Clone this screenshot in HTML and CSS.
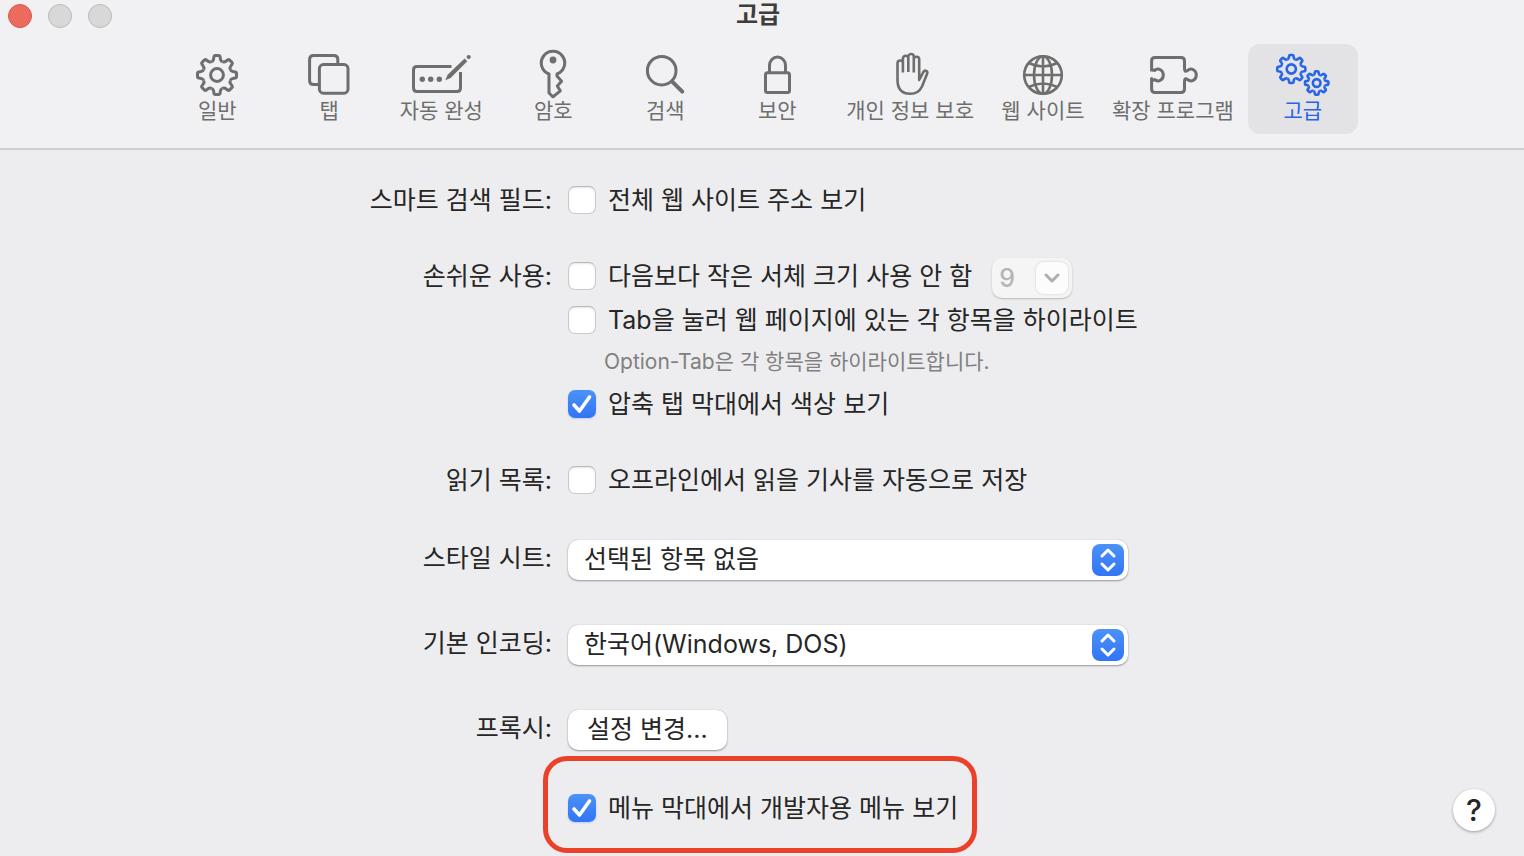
FILE: index.html
```html
<!DOCTYPE html>
<html lang="ko">
<head>
<meta charset="utf-8">
<meta name="viewport" content="width=device-width, initial-scale=1">
<title>고급</title>
<link rel="stylesheet" href="styles.css">
</head>
<body>
<svg class="defs" aria-hidden="true">
  <defs>
    <path id="tooth" d="M-5.5-13.3C-4.2-13.8-3.6-14.6-3.4-16L-3.1-18.1Q-2.9-19.5-1.6-19.5H1.6Q2.9-19.5 3.1-18.1L3.4-16C3.6-14.6 4.2-13.8 5.5-13.3" vector-effect="non-scaling-stroke"/>
    <g id="gear">
      <use href="#tooth"/><use href="#tooth" transform="rotate(45)"/><use href="#tooth" transform="rotate(90)"/><use href="#tooth" transform="rotate(135)"/>
      <use href="#tooth" transform="rotate(180)"/><use href="#tooth" transform="rotate(225)"/><use href="#tooth" transform="rotate(270)"/><use href="#tooth" transform="rotate(315)"/>
      <circle r="6.4" vector-effect="non-scaling-stroke"/>
    </g>
  </defs>
</svg>
<header class="header">
  <div class="titlebar">
    <div class="lights">
      <button class="light light-close" aria-label="닫기"></button>
      <button class="light" aria-label="최소화" disabled></button>
      <button class="light" aria-label="확대" disabled></button>
    </div>
    <h1 class="title">고급</h1>
  </div>
  <nav class="toolbar">
    <button class="tab"><svg class="icon" viewBox="0 0 60 48"><use href="#gear" transform="translate(30 25)"/></svg><span>일반</span></button>
    <button class="tab"><svg class="icon" viewBox="0 0 60 48"><rect x="20.4" y="14.6" width="28.6" height="28.6" rx="4"/><path d="M20 34.4H14.6Q10.6 34.4 10.6 30.4V9.6Q10.6 5.6 14.6 5.6H34.8Q38.8 5.6 38.8 9.6V14"/></svg><span>탭</span></button>
    <button class="tab"><svg class="icon" viewBox="0 0 60 48"><path d="M40.5 16.5H6Q2.5 16.5 2.5 20V38Q2.5 41.5 6 41.5H46Q49.5 41.5 49.5 38V22"/><g class="solid"><circle cx="11.3" cy="29.3" r="2.7"/><circle cx="19.7" cy="29.3" r="2.7"/><circle cx="28.3" cy="29.3" r="2.7"/><path d="M34.3 30.3L36.6 24.8L53.6 8.6L56.3 11.3L39.6 27.9Z"/><circle cx="57.7" cy="7" r="2.1"/></g></svg><span>자동 완성</span></button>
    <button class="tab"><svg class="icon" viewBox="0 0 60 48"><path d="M26 24V43L30 46.8L37.3 40.8L34.3 36L38.6 31.2L34 26V24A11.7 11.7 0 1 0 26 24Z"/><circle class="solid" cx="30" cy="10" r="3.4"/></svg><span>암호</span></button>
    <button class="tab"><svg class="icon" viewBox="0 0 60 48"><circle cx="26.7" cy="20.7" r="14.3"/><path class="thick" d="M37.5 31.8L47.3 41.6"/></svg><span>검색</span></button>
    <button class="tab"><svg class="icon" viewBox="0 0 60 48"><rect x="18.5" y="22.7" width="24" height="19.8" rx="2"/><path d="M22.5 22.5V15.5A8 8.5 0 0 1 38.5 15.5V22.5"/></svg><span>보안</span></button>
    <button class="tab"><svg class="icon" viewBox="0 0 60 48"><path class="thin" d="M22.9 22.5V13.2A2.7 2.7 0 0 0 17.5 13.2V30C17.5 39 22 43.8 30.5 43.8C36 43.8 39.6 41.5 42 36.5L47 24C48.3 20.8 45 19.4 43.4 22L39.2 30V9.4A2.7 2.7 0 0 0 33.8 9.4V22.5M22.9 15V8.5A2.7 2.7 0 0 1 28.3 8.5V22M28.3 9V6.8A2.75 2.75 0 0 1 33.8 6.8V10"/></svg><span>개인 정보 보호</span></button>
    <button class="tab"><svg class="icon" viewBox="0 0 60 48"><g class="thin"><circle cx="30" cy="25" r="18.8"/><ellipse cx="30" cy="25" rx="9" ry="18.8"/><path d="M30 6V44M11 25H49M15.7 13Q30 20 44.3 13M15.7 37Q30 30 44.3 37"/></g></svg><span>웹 사이트</span></button>
    <button class="tab"><svg class="icon" viewBox="0 0 60 48"><path d="M8.6 21.5V11Q8.6 7.5 12 7.5H38Q41.5 7.5 41.5 11V18.5C41.5 21.6 42.5 22 44.5 20.5C48.5 17.2 53.3 20.2 53.3 25S48.5 32.8 44.5 29.5C42.5 28 41.5 28.4 41.5 31.5V39Q41.5 42.5 38 42.5H12Q8.6 42.5 8.6 39V28.5C9 31 10.5 30.5 11.5 29.5C15.5 32.8 20.3 29.8 20.3 25S15.5 17.2 11.5 20.5C10.5 19.5 9 19 8.6 21.5"/></svg><span>확장 프로그램</span></button>
    <button class="tab tab-active" aria-current="page"><svg class="icon" viewBox="0 0 60 48"><use href="#gear" transform="translate(18.3 19) scale(.72)"/><use href="#gear" transform="translate(43.7 33) scale(.6)"/></svg><span>고급</span></button>
  </nav>
</header>
<main class="form">
  <div class="name row">스마트 검색 필드:</div>
  <div class="row">
    <label class="option"><span class="check"><input type="checkbox"></span>전체 웹 사이트 주소 보기</label>
  </div>

  <div class="name row gap-m">손쉬운 사용:</div>
  <div class="gap-m">
    <div class="size-line">
      <label class="option"><span class="check"><input type="checkbox"></span>다음보다 작은 서체 크기 사용 안 함</label>
      <div class="combo"><input class="combo-text" type="text" value="9" aria-label="최소 서체 크기" disabled><button class="combo-button" aria-label="크기 목록" disabled><svg class="chevron" viewBox="0 0 16 10"><path d="M2 2L8 8L14 2"/></svg></button></div>
    </div>
    <label class="option"><span class="check"><input type="checkbox"></span>Tab을 눌러 웹 페이지에 있는 각 항목을 하이라이트</label>
    <p class="hint">Option-Tab은 각 항목을 하이라이트합니다.</p>
    <label class="option"><span class="check"><input type="checkbox" checked><svg class="tick" viewBox="0 0 28 28"><path d="M6 15L11.5 21L21.5 7"/></svg></span>압축 탭 막대에서 색상 보기</label>
  </div>

  <div class="name row gap-m">읽기 목록:</div>
  <div class="row gap-m">
    <label class="option"><span class="check"><input type="checkbox"></span>오프라인에서 읽을 기사를 자동으로 저장</label>
  </div>

  <label class="name row gap-m sheet" for="sheet">스타일 시트:</label>
  <div class="popup gap-m sheet">
    <select id="sheet"><option>선택된 항목 없음</option></select>
    <svg class="arrows" viewBox="0 0 32 32"><path d="M10 12L16 6L22 12M10 20L16 26L22 20"/></svg>
  </div>

  <label class="name row gap-l" for="encoding">기본 인코딩:</label>
  <div class="popup gap-l">
    <select id="encoding"><option>한국어(Windows, DOS)</option></select>
    <svg class="arrows" viewBox="0 0 32 32"><path d="M10 12L16 6L22 12M10 20L16 26L22 20"/></svg>
  </div>

  <div class="name row gap-l">프록시:</div>
  <div class="gap-l"><button class="push">설정 변경...</button></div>

  <div class="last">
    <label class="option developer"><span class="check"><input type="checkbox" checked><svg class="tick" viewBox="0 0 28 28"><path d="M6 15L11.5 21L21.5 7"/></svg></span>메뉴 막대에서 개발자용 메뉴 보기</label>
    <button class="help" aria-label="도움말">?</button>
  </div>
</main>
</body>
</html>
```
FILE: styles.css
```css
* { box-sizing: border-box; }

body {
  margin: 0;
  background: #ededef;
  color: #262626;
  font: 25px/36px Inter, "Noto Sans CJK KR", sans-serif;
}

button, input, select {
  margin: 0;
  padding: 0;
  border: 0;
  color: inherit;
  font: inherit;
}

.defs { display: block; width: 0; height: 0; }

.header {
  background: #f1f1f3;
  border-bottom: 2px solid #cececf;
  padding-bottom: 14px;
}

.titlebar {
  display: grid;
  grid-template-columns: 1fr auto 1fr;
  align-items: center;
  height: 32px;
  padding: 0 8px;
}

.lights { display: flex; gap: 16px; }

.light {
  width: 24px;
  height: 24px;
  border: 1px solid #b9b9ba;
  border-radius: 50%;
  background: #d8d8d9;
}

.light-close { background: #ed6a5e; border-color: #d5574c; }

.title {
  margin: 0;
  padding: 0 8px 3px 0;
  color: #3d3d3d;
  font-size: 24px;
  font-weight: 700;
  line-height: 28px;
}

.toolbar {
  display: flex;
  justify-content: center;
  gap: 2px;
  padding: 12px 4px 0 0;
}

.tab {
  display: flex;
  flex-direction: column;
  align-items: center;
  min-width: 110px;
  height: 90px;
  padding: 6px 12px;
  border-radius: 12px;
  background: none;
  color: #6e6e6e;
  font-size: 21px;
  line-height: 26px;
  white-space: nowrap;
}

.tab-active { background: #e3e3e5; color: #2864e6; }

.icon {
  width: 60px;
  height: 48px;
  flex: none;
  overflow: visible;
  fill: none;
  stroke: currentColor;
  stroke-width: 3;
  stroke-linejoin: round;
}

.icon .thin { stroke-width: 2.6; }
.icon .thick { stroke-width: 4; stroke-linecap: round; }
.icon .solid { fill: currentColor; stroke: none; }
.tab-active .icon { stroke-width: 2.6; }

.form {
  display: grid;
  grid-template-columns: minmax(0, 552fr) minmax(0, 956fr);
  column-gap: 16px;
  padding-top: 32px;
}

.name { text-align: right; }
.row { min-height: 36px; }
.gap-m { margin-top: 40px; }
.gap-m.sheet { margin-top: 42px; }
.gap-l { margin-top: 45px; }

.option {
  display: flex;
  align-items: center;
  gap: 12px;
  width: fit-content;
  height: 36px;
  white-space: nowrap;
}

.check { display: grid; }
.check > * { grid-area: 1 / 1; }

.check input {
  appearance: none;
  width: 28px;
  height: 28px;
  border: 1px solid #cacacb;
  border-top-color: #b9b9ba;
  border-radius: 7px;
  background: #fff;
  box-shadow: inset 0 1px 2px #0000001a;
}

.check input:checked {
  border: 0;
  background: linear-gradient(#4b92f8, #3175f5);
  box-shadow: 0 1px 2px #3478f640;
}

.tick {
  width: 28px;
  height: 28px;
  fill: none;
  stroke: #fff;
  stroke-width: 3.6;
  stroke-linecap: round;
  stroke-linejoin: round;
  pointer-events: none;
}

.size-line {
  display: flex;
  align-items: flex-start;
  gap: 20px;
  height: 40px;
  margin-bottom: 4px;
}

.combo {
  display: flex;
  align-items: center;
  width: 80px;
  height: 40px;
  padding: 4px;
  border-radius: 10px;
  background: #f5f5f6;
  box-shadow: 0 1px 2px #00000038;
}

.combo-text {
  width: 40px;
  padding-left: 3px;
  background: none;
  color: #b5b5b6;
  font-weight: 500;
}

.combo-button {
  display: grid;
  place-items: center;
  width: 32px;
  height: 32px;
  border-radius: 8px;
  background: #fcfcfc;
  box-shadow: 0 0 3px #00000026;
}

.chevron {
  width: 16px;
  height: 10px;
  fill: none;
  stroke: #aeaeaf;
  stroke-width: 3;
  stroke-linecap: round;
  stroke-linejoin: round;
}

.hint {
  margin: 0;
  padding-left: 36px;
  color: #808081;
  font-size: 21px;
  line-height: 48px;
}

.popup {
  display: grid;
  align-items: center;
  width: 560px;
  max-width: 100%;
  height: 40px;
}

.popup > * { grid-area: 1 / 1; }

.popup select, .push {
  height: 40px;
  border-radius: 10px;
  background: #fff;
  box-shadow: 0 0 1px #00000040, 0 1px 2px #00000059;
}

.popup select { appearance: none; width: 100%; padding: 0 48px 3px 16px; }
.push { display: block; min-width: 158px; padding: 0 19px 3px; }

.arrows {
  justify-self: end;
  width: 32px;
  height: 32px;
  margin-right: 4px;
  border-radius: 8px;
  background: linear-gradient(#4b92f8, #3175f5);
  fill: none;
  stroke: #fff;
  stroke-width: 3;
  stroke-linecap: round;
  stroke-linejoin: round;
  pointer-events: none;
}

.last {
  grid-column: 2;
  display: flex;
  justify-content: space-between;
  align-items: center;
  margin: 6px 29px 0 -25px;
}

.developer {
  height: auto;
  padding: 29px 14px 22px 20px;
  border: 5px solid #eb4128;
  border-radius: 24px;
}

.help {
  width: 42px;
  height: 42px;
  margin-top: 10px;
  border-radius: 50%;
  background: #fff;
  box-shadow: 0 1px 3px #00000059;
  font-size: 30px;
  font-weight: 500;
  line-height: 42px;
}
```
